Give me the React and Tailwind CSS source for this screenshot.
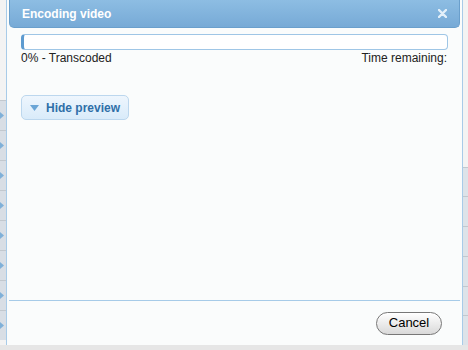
import React from 'react';

const Arrow = () => (
    <svg width="4" height="7" viewBox="0 0 4 7" className="block"><path d="M0 0l4 3.5L0 7z" fill="#7fb0d8" /></svg>
);

const App = () => {
    return (
        <div className="w-[468px] h-[350px] bg-[#e6e6e6] flex flex-col overflow-hidden" style={{ fontFamily: '"Liberation Sans", Arial, sans-serif' }}>
            <div className="flex flex-1 min-h-0">
                {/* Left page strip */}
                <div className="w-[6px] flex flex-col bg-[#f3f3f3] overflow-hidden">
                    <div className="h-[100px] bg-[#f3f3f3]" />
                    <div className="flex flex-col flex-1">
                        {[...Array(8)].map((_, i) => (
                            <div key={i} className="h-[30px] border-t border-[#c2c8ce] bg-[#d8dee5] flex items-center">
                                <Arrow />
                            </div>
                        ))}
                    </div>
                </div>

                {/* Dialog */}
                <div className="flex-1 flex flex-col bg-[#fafcfc] border-l border-r border-[#a8cbe8]">
                    <div className="mx-[2px] h-[28px] rounded-b-[5px] bg-gradient-to-b from-[#8dbde3] to-[#77aad6] border border-t-0 border-[#6a9fcc] flex items-center justify-between pl-[12px] pr-[12px]">
                        <span className="text-white font-bold text-[12px]">Encoding video</span>
                        <svg width="9" height="9" viewBox="0 0 9 9"><path d="M1 1l7 7M8 1L1 8" stroke="#e4f0fa" strokeWidth="2.4" strokeLinecap="round" /></svg>
                    </div>

                    <div className="px-[14px] pt-[6px] flex-1">
                        <div className="h-[16px] rounded-[4px] border border-[#9fc6e6] bg-white border-l-[3px] border-l-[#5d9bd0]" />
                        <div className="flex justify-between text-[12px] text-[#222] leading-[16px] pr-[1px]">
                            <span>0% - Transcoded</span>
                            <span>Time remaining:</span>
                        </div>
                        <button className="mt-[29px] h-[25px] w-[108px] rounded-[5px] border border-[#bcd7ee] bg-gradient-to-b from-[#eef6fd] to-[#d9ebfa] flex items-center gap-[7px] pl-[8px] text-[12px] font-bold text-[#2f6fa8]">
                            <svg width="9" height="6" viewBox="0 0 9 6"><path d="M0 0h9L4.5 6z" fill="#6aa5d6" /></svg>
                            Hide preview
                        </button>
                    </div>

                    <div className="mx-[2px] border-t border-[#a6cbe8]" />
                    <div className="h-[44px] flex items-center justify-end pr-[20px]">
                        <button className="h-[23px] w-[66px] rounded-full border border-[#777] bg-gradient-to-b from-white via-[#ececec] to-[#d9d9d9] text-[13px] text-black shadow-[inset_0_1px_0_#fff]">
                            Cancel
                        </button>
                    </div>
                </div>

                {/* Right page strip */}
                <div className="w-[5px] flex flex-col bg-[#f3f3f3]">
                    <div className="h-[168px]" />
                    {[...Array(6)].map((_, i) => (
                        <div key={i} className="h-[30px] border-t border-[#c2c8ce] bg-[#dde3e9]" />
                    ))}
                </div>
            </div>
            <div className="h-[5px] bg-[#e6e6e6]" />
        </div>
    );
};

export default App;
